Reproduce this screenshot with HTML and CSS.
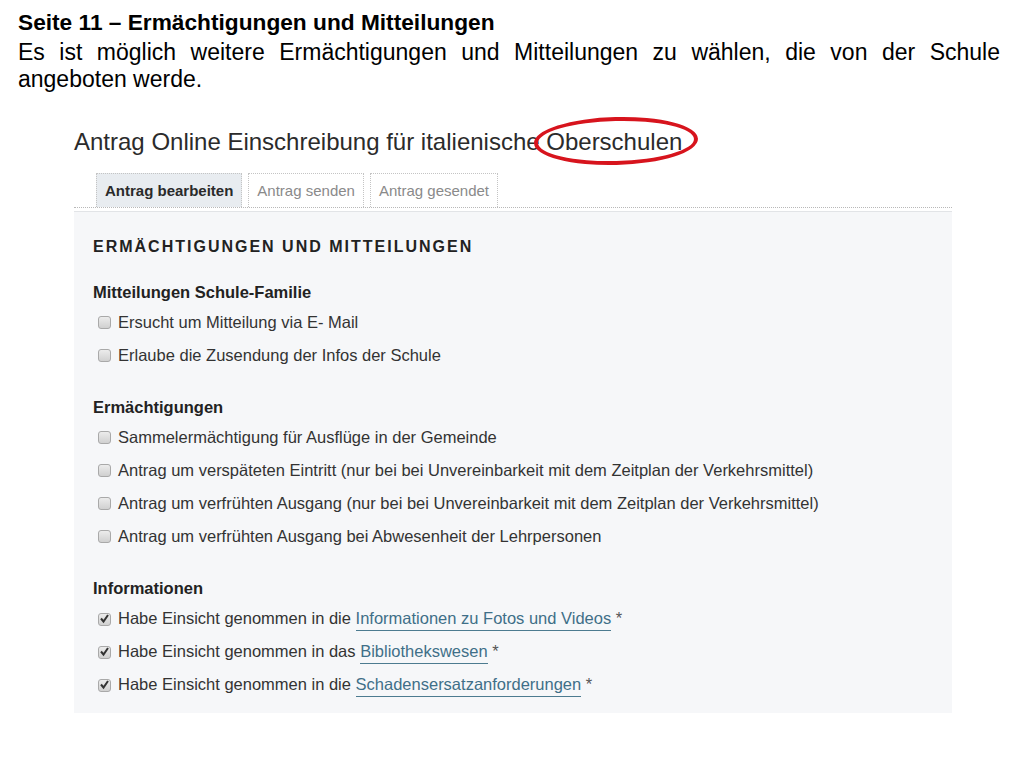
FILE: index.html
```html
<!DOCTYPE html>
<html lang="de">
<head>
  <meta charset="UTF-8">
  <title>Seite 11 – Ermächtigungen und Mitteilungen</title>
  <link rel="stylesheet" href="styles.css">
</head>
<body>
  <div class="intro">
    <div class="intro-title">Seite 11 – Ermächtigungen und Mitteilungen</div>
    <p class="intro-text">Es ist möglich weitere Ermächtigungen und Mitteilungen zu wählen, die von der Schule angeboten werde.</p>
  </div>

  <div class="shot">
    <div class="page-title">Antrag Online Einschreibung für italienische <span class="marked">Oberschulen</span></div>

    <div class="tabs">
      <div class="tab active">Antrag bearbeiten</div>
      <div class="tab">Antrag senden</div>
      <div class="tab">Antrag gesendet</div>
    </div>

    <div class="panel">
      <div class="section-title">ERMÄCHTIGUNGEN UND MITTEILUNGEN</div>

      <div class="group">
        <div class="group-title">Mitteilungen Schule-Familie</div>
        <div class="item"><span class="cb"></span>Ersucht um Mitteilung via E- Mail</div>
        <div class="item"><span class="cb"></span>Erlaube die Zusendung der Infos der Schule</div>
      </div>

      <div class="group">
        <div class="group-title">Ermächtigungen</div>
        <div class="item"><span class="cb"></span>Sammelermächtigung für Ausflüge in der Gemeinde</div>
        <div class="item"><span class="cb"></span>Antrag um verspäteten Eintritt (nur bei bei Unvereinbarkeit mit dem Zeitplan der Verkehrsmittel)</div>
        <div class="item"><span class="cb"></span>Antrag um verfrühten Ausgang (nur bei bei Unvereinbarkeit mit dem Zeitplan der Verkehrsmittel)</div>
        <div class="item"><span class="cb"></span>Antrag um verfrühten Ausgang bei Abwesenheit der Lehrpersonen</div>
      </div>

      <div class="group">
        <div class="group-title">Informationen</div>
        <div class="item"><span class="cb checked"><svg viewBox="0 0 13 13" width="13" height="13"><path d="M3 6.5 L5.5 9.5 L10 3" fill="none" stroke="#333" stroke-width="2"/></svg></span>Habe Einsicht genommen in die <a class="link">Informationen zu Fotos und Videos</a> <span class="req">*</span></div>
        <div class="item"><span class="cb checked"><svg viewBox="0 0 13 13" width="13" height="13"><path d="M3 6.5 L5.5 9.5 L10 3" fill="none" stroke="#333" stroke-width="2"/></svg></span>Habe Einsicht genommen in das <a class="link">Bibliothekswesen</a> <span class="req">*</span></div>
        <div class="item"><span class="cb checked"><svg viewBox="0 0 13 13" width="13" height="13"><path d="M3 6.5 L5.5 9.5 L10 3" fill="none" stroke="#333" stroke-width="2"/></svg></span>Habe Einsicht genommen in die <a class="link">Schadensersatzanforderungen</a> <span class="req">*</span></div>
      </div>
    </div>
  </div>
</body>
</html>
```

FILE: styles.css
```css
body {
  margin: 0;
  background: #fff;
  font-family: 'Liberation Sans', Arial, sans-serif;
  color: #000;
}
.intro {
  padding: 9px 24px 0 18px;
}
.intro-title {
  font-size: 22.7px;
  font-weight: bold;
  line-height: 27px;
}
.intro-text {
  margin: 3px 0 0;
  font-size: 23px;
  line-height: 27px;
  text-align: justify;
}
.shot {
  margin: 34px 0 0 74px;
  width: 878px;
}
.page-title {
  font-size: 24px;
  line-height: 30px;
  color: #2b2b2b;
}
.marked {
  position: relative;
}
.marked::after {
  content: '';
  position: absolute;
  left: -12px;
  right: -16px;
  top: -11px;
  bottom: -10px;
  border: 4px solid #d7141d;
  border-radius: 50%;
  transform: rotate(-1.5deg);
}
.tabs {
  display: flex;
  gap: 6px;
  margin-top: 16px;
  padding-left: 22px;
  border-bottom: 1px dotted #b8b8b8;
}
.tab {
  padding: 0 8px;
  height: 33px;
  line-height: 33px;
  font-size: 15px;
  color: #8a8a8a;
  border: 1px dotted #c4c4c4;
  border-bottom: none;
}
.tab.active {
  background: #e8ecf0;
  color: #2a2a2a;
  font-weight: bold;
}
.panel {
  margin-top: 3px;
  border-top: 1px solid #e2e4e7;
  background: #f6f7f9;
  padding: 25px 19px 13px;
  color: #333;
}
.section-title {
  font-size: 16px;
  font-weight: bold;
  letter-spacing: 2px;
  line-height: 20px;
  color: #222;
}
.group {
  margin-top: 26px;
}
.section-title + .group {
  margin-top: 25px;
}
.group-title {
  font-size: 16.5px;
  font-weight: bold;
  line-height: 20px;
  color: #222;
  margin-bottom: 4px;
}
.item {
  font-size: 16.5px;
  line-height: 32.7px;
  white-space: nowrap;
}
.cb {
  display: inline-flex;
  align-items: center;
  justify-content: center;
  box-sizing: border-box;
  width: 13px;
  height: 13px;
  margin: 0 7px 0 5px;
  vertical-align: -1px;
  border: 1px solid #a9a9a9;
  border-radius: 3px;
  background: linear-gradient(#ececec, #d0d0d0);
}
.cb svg {
  flex: none;
  margin-top: -2px;
}
.link {
  color: #3f6f88;
  border-bottom: 1px solid #4c7b90;
  padding-bottom: 3px;
}
.req {
  color: #555;
}
```
